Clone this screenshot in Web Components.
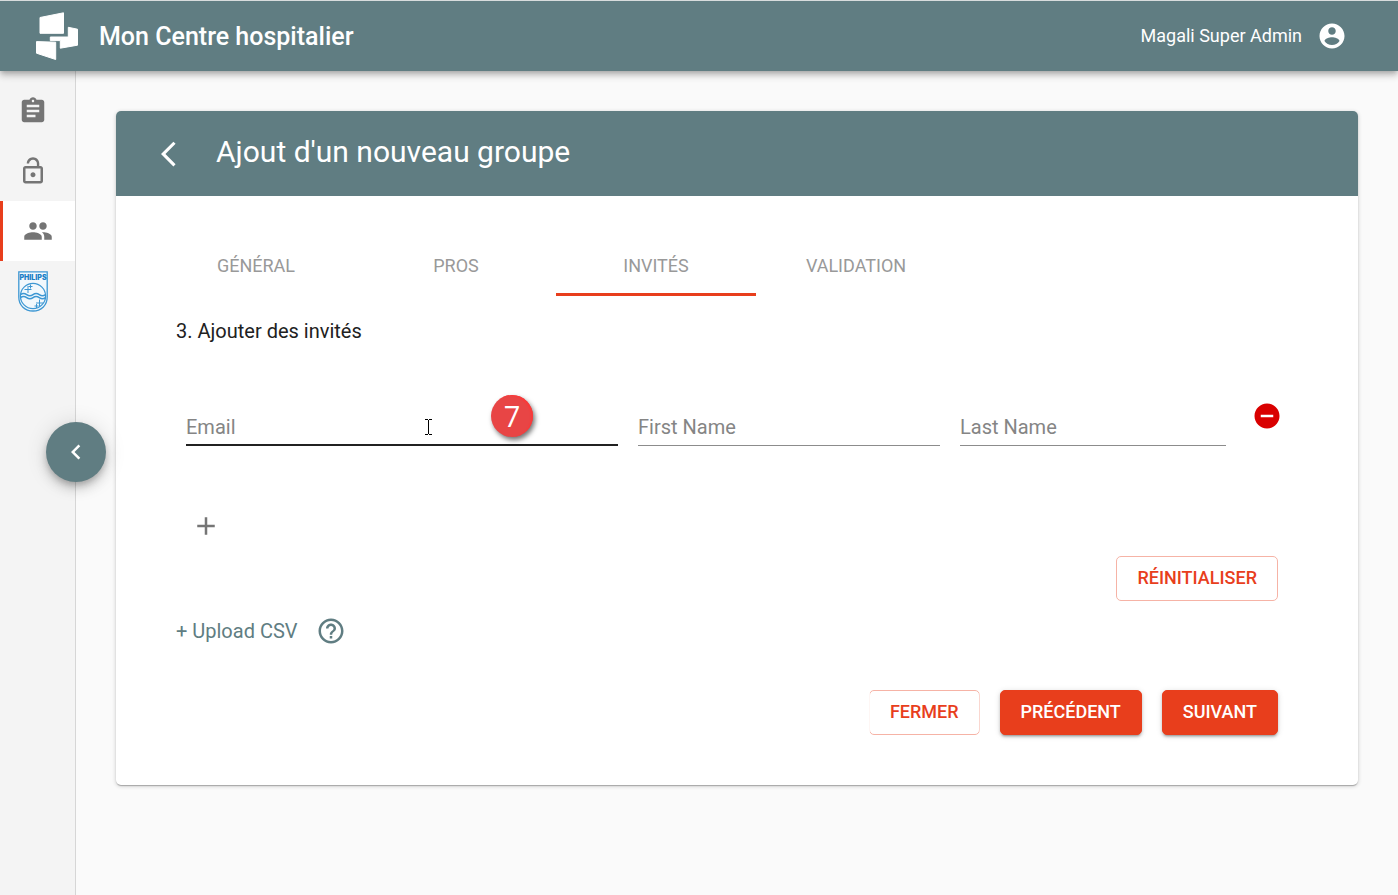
<!DOCTYPE html>
<html lang="fr">
<head>
<meta charset="utf-8">
<title>Mon Centre hospitalier</title>
<meta name="viewport" content="width=device-width, initial-scale=1">
<style>
  :root {
    --teal: #607d82;
    --orange: #e83e1c;
    --orange-soft: #f6b3a6;
    --grey: #757575;
  }
  body {
    margin: 0;
    background: #fafafa;
    color: #212121;
    font: 20px/30px Roboto, "Liberation Sans", sans-serif;
  }
</style>
</head>
<body>
<app-shell>
  <app-header slot="header" heading="Mon Centre hospitalier" user="Magali Super Admin"></app-header>
  <side-nav slot="nav">
    <nav-item icon="clipboard" label="Dossiers"></nav-item>
    <nav-item icon="lock" label="Accès"></nav-item>
    <nav-item icon="people" label="Groupes" active></nav-item>
    <nav-item icon="philips" label="Philips"></nav-item>
  </side-nav>
  <page-card heading="Ajout d'un nouveau groupe">
    <tab-bar>
      <tab-item>GÉNÉRAL</tab-item>
      <tab-item>PROS</tab-item>
      <tab-item active>INVITÉS</tab-item>
      <tab-item>VALIDATION</tab-item>
    </tab-bar>
    <guest-form></guest-form>
  </page-card>
</app-shell>

<script>
const define = (name, html, setup) => {
  const template = document.createElement('template');
  template.innerHTML = html;
  customElements.define(name, class extends HTMLElement {
    connectedCallback() {
      if (this.shadowRoot) return;
      const root = this.attachShadow({ mode: 'open' });
      root.append(template.content.cloneNode(true));
      if (setup) setup(this, root);
    }
  });
};

const icons = {
  clipboard: '<path d="M19 3h-4.18C14.4 1.84 13.3 1 12 1c-1.3 0-2.4.84-2.82 2H5c-1.1 0-2 .9-2 2v14c0 1.1.9 2 2 2h14c1.1 0 2-.9 2-2V5c0-1.1-.9-2-2-2zm-7 0c.55 0 1 .45 1 1s-.45 1-1 1-1-.45-1-1 .45-1 1-1zm2 14H7v-2h7v2zm3-4H7v-2h10v2zm0-4H7V7h10v2z"/>',
  lock: '<path d="M12 17c1.1 0 2-.9 2-2s-.9-2-2-2-2 .9-2 2 .9 2 2 2zm6-9h-1V6c0-2.76-2.24-5-5-5S7 3.24 7 6h1.9c0-1.71 1.39-3.1 3.1-3.1 1.71 0 3.1 1.39 3.1 3.1v2H6c-1.1 0-2 .9-2 2v10c0 1.1.9 2 2 2h12c1.1 0 2-.9 2-2V10c0-1.1-.9-2-2-2zm0 12H6V10h12v10z"/>',
  people: '<path d="M16 11c1.66 0 2.99-1.34 2.99-3S17.66 5 16 5c-1.66 0-3 1.34-3 3s1.34 3 3 3zm-8 0c1.66 0 2.99-1.34 2.99-3S9.66 5 8 5C6.34 5 5 6.34 5 8s1.34 3 3 3zm0 2c-2.33 0-7 1.17-7 3.5V19h14v-2.5c0-2.33-4.67-3.5-7-3.5zm8 0c-.29 0-.62.02-.97.05 1.16.84 1.97 1.97 1.97 3.45V19h6v-2.5c0-2.33-4.67-3.5-7-3.5z"/>',
  account: '<path d="M12 2C6.48 2 2 6.48 2 12s4.48 10 10 10 10-4.48 10-10S17.52 2 12 2zm0 3c1.66 0 3 1.34 3 3s-1.34 3-3 3-3-1.34-3-3 1.34-3 3-3zm0 14.2c-2.5 0-4.71-1.28-6-3.22.03-1.99 4-3.08 6-3.08 1.99 0 5.97 1.09 6 3.08-1.29 1.94-3.5 3.22-6 3.22z"/>',
  back: '<path d="M11.67 3.87L9.9 2.1 0 12l9.9 9.9 1.77-1.77L3.54 12z"/>',
  chevron: '<path d="M15.41 7.41L14 6l-6 6 6 6 1.41-1.41L10.83 12z"/>',
  remove: '<path d="M12 2C6.48 2 2 6.48 2 12s4.48 10 10 10 10-4.48 10-10S17.52 2 12 2zm5 11H7v-2h10v2z"/>',
  add: '<path d="M19 13h-6v6h-2v-6H5v-2h6V5h2v6h6v2z"/>',
  help: '<path d="M11 18h2v-2h-2v2zm1-16C6.48 2 2 6.48 2 12s4.48 10 10 10 10-4.48 10-10S17.52 2 12 2zm0 18c-4.41 0-8-3.59-8-8s3.59-8 8-8 8 3.59 8 8-3.59 8-8 8zm0-14c-2.21 0-4 1.79-4 4h2c0-1.1.9-2 2-2s2 .9 2 2c0 2-3 1.75-3 5h2c0-2.25 3-2.5 3-5 0-2.21-1.79-4-4-4z"/>'
};

define('app-icon', `
  <style>
    :host { display: block; flex: none; width: 30px; height: 30px; }
    svg { display: block; width: 100%; height: 100%; fill: currentColor; }
  </style>
  <svg viewBox="0 0 24 24" aria-hidden="true"></svg>`,
  (host, root) => { root.querySelector('svg').innerHTML = icons[host.getAttribute('name')]; });

define('brand-logo', `
  <style>
    :host { display: block; flex: none; width: 44px; height: 50px; }
    svg { display: block; }
  </style>
  <svg width="44" height="50" viewBox="35 11 44 50" fill="#fff" stroke="#fff" stroke-width="1" stroke-linejoin="round" aria-hidden="true">
    <path d="M40 17.5L63.5 12.8V33.3H40z"/>
    <path d="M68.3 27.3L77.5 29.2V45.2L60.3 48.2V40.6H50.3V37H68.3z"/>
    <path d="M36.5 41.6L55.7 42.2V59.5L36.5 53.2z"/>
  </svg>`);

define('philips-shield', `
  <style>
    :host { display: block; flex: none; width: 30px; height: 41px; }
    svg { display: block; }
  </style>
  <svg width="30" height="41" viewBox="0 0 30 41" fill="none" stroke="#3d97d3" aria-hidden="true">
    <path d="M.8.8H29.2V26C29.2 34.5 23 40 15 40S.8 34.5.8 26z" fill="#f2f8fc" stroke-width="1.3"/>
    <text x="15" y="9" font-family="Inter, sans-serif" font-size="7" font-weight="900" text-anchor="middle" fill="#1b7fc6" stroke="none">PHILIPS</text>
    <circle cx="15" cy="25" r="12.6" stroke-width="1.2"/>
    <path d="M2.5 23.6q3-2.400 6.200 0t6.300 0 6.300 0 6.200 0M2.500 26.600q3-2.400 6.200 0t6.300 0 6.300 0 6.200 0" stroke-width="1.500"/>
    <path d="M10 15v7M6.500 18.500h7M12.500 13.500v4M10.500 15.500h4M21.500 28.500v7M18 32h7M18.500 33v4M16.500 35h4" stroke-width="1"/>
  </svg>`);

define('app-shell', `
  <style>
    :host { display: flex; flex-direction: column; min-height: 100vh; position: relative; }
    .body { display: flex; flex: 1; }
    main { flex: 1; min-width: 0; padding: 40px; }
    .toggle {
      position: absolute; left: 46px; top: 422px; width: 60px; height: 60px;
      display: grid; place-items: center; padding: 0; border: 0; border-radius: 50%;
      background: var(--teal); color: #fff; cursor: pointer;
      box-shadow: 0 4px 6px -1px rgba(0,0,0,.2), 0 7px 12px rgba(0,0,0,.14), 0 1px 22px rgba(0,0,0,.12);
    }
  </style>
  <slot name="header"></slot>
  <div class="body">
    <slot name="nav"></slot>
    <main><slot></slot></main>
  </div>
  <button class="toggle" type="button" aria-label="Réduire le menu"><app-icon name="chevron"></app-icon></button>`);

define('app-header', `
  <style>
    :host { display: block; position: relative; z-index: 1; }
    header {
      display: flex; align-items: center; height: 70px; padding: 0 51px 0 35px;
      border-top: 1px solid #d8dcdd; background: var(--teal); color: #fff;
      box-shadow: 0 2px 5px -1px rgba(0,0,0,.2), 0 5px 6px rgba(0,0,0,.14), 0 1px 12px rgba(0,0,0,.12);
    }
    h1 { flex: 1; margin: 0 20px; padding-top: 2px; font-size: 25px; font-weight: 500; }
    .user { display: flex; align-items: center; gap: 15px; font-size: 18px; line-height: 32px; }
  </style>
  <header>
    <brand-logo></brand-logo>
    <h1></h1>
    <div class="user"><span></span><app-icon name="account"></app-icon></div>
  </header>`,
  (host, root) => {
    root.querySelector('h1').textContent = host.getAttribute('heading');
    root.querySelector('span').textContent = host.getAttribute('user');
  });

define('side-nav', `
  <style>
    :host { display: block; flex: none; width: 75px; border-right: 1px solid #d6d6d6; background: #f4f4f4; }
    nav { padding-top: 10px; }
  </style>
  <nav aria-label="Menu"><slot></slot></nav>`);

define('nav-item', `
  <style>
    :host { display: block; color: var(--grey); }
    a { display: flex; align-items: center; height: 60px; padding-left: 18px; color: inherit; }
    :host([active]) a { padding-left: 20px; border-left: 3px solid var(--orange); background: #fff; }
  </style>
  <a href="#"></a>`,
  (host, root) => {
    const name = host.getAttribute('icon');
    const link = root.querySelector('a');
    link.setAttribute('aria-label', host.getAttribute('label'));
    link.innerHTML = name === 'philips' ? '<philips-shield></philips-shield>' : `<app-icon name="${name}"></app-icon>`;
  });

define('page-card', `
  <style>
    :host {
      display: block; border-radius: 5px; background: #fff;
      box-shadow: 0 1px 4px rgba(0,0,0,.2), 0 1px 1px rgba(0,0,0,.14), 0 2px 1px -1px rgba(0,0,0,.12);
    }
    header {
      display: flex; align-items: center; gap: 25px; height: 85px; padding: 0 45px;
      border-radius: 5px 5px 0 0; background: var(--teal); color: #fff;
    }
    button { padding: 0; border: 0; background: none; color: inherit; cursor: pointer; }
    h2 { margin: 0; padding-bottom: 4px; font-size: 30px; font-weight: 400; line-height: 40px; }
    .content { padding: 40px 80px 50px 40px; }
  </style>
  <header>
    <button type="button" aria-label="Retour"><app-icon name="back"></app-icon></button>
    <h2></h2>
  </header>
  <div class="content"><slot></slot></div>`,
  (host, root) => { root.querySelector('h2').textContent = host.getAttribute('heading'); });

define('tab-bar', `
  <style>
    :host { display: block; }
    div { display: flex; }
  </style>
  <div role="tablist"><slot></slot></div>`);

define('tab-item', `
  <style>
    :host { display: block; flex: 0 1 200px; }
    button {
      width: 100%; height: 60px; padding: 3px 0 0; border: 0; border-bottom: 3px solid transparent;
      background: none; color: #999; font: 400 18px/30px Roboto, sans-serif; cursor: pointer;
    }
    :host([active]) button { border-color: var(--orange); }
  </style>
  <button type="button" role="tab"><slot></slot></button>`,
  (host, root) => root.querySelector('button').setAttribute('aria-selected', host.hasAttribute('active')));

define('text-field', `
  <style>
    :host { display: block; position: relative; min-width: 0; }
    input {
      display: block; box-sizing: border-box; width: 100%; height: 50px; padding: 12px 0 0;
      border: 0; border-bottom: 1px solid #8c8c8c; border-radius: 0; outline: 0;
      background: none; color: #212121; font: 20px/30px Roboto, sans-serif;
    }
    :host([highlighted]) input { padding-top: 13px; border-bottom: 2px solid #212121; }
    input::placeholder { color: #858585; opacity: 1; }
  </style>
  <input type="text"><slot></slot>`,
  (host, root) => {
    const input = root.querySelector('input');
    input.placeholder = host.getAttribute('label');
    input.setAttribute('aria-label', input.placeholder);
  });

define('text-cursor', `
  <style>
    :host { position: absolute; left: 239px; top: 23px; width: 7px; height: 16px; pointer-events: none; }
    svg { display: block; }
  </style>
  <svg width="7" height="16" viewBox="0 0 7 16" fill="none" stroke="#000" shape-rendering="crispEdges" aria-hidden="true">
    <path d="M0 .5h3M4 .5h3M3.500 1v14M0 15.500h3M4 15.500h3"/>
  </svg>`);

define('step-badge', `
  <style>
    :host {
      position: absolute; left: 305px; top: -1px; width: 42px; height: 42px; border-radius: 50%;
      background: #e84545; color: #fff; font: 29px/42px "Open Sans", "Noto Sans", sans-serif; text-align: center;
      box-shadow: inset -2px 1px 1px #f93a3a, 2px 3px 5px rgba(0,0,0,.55);
    }
  </style>
  <slot></slot>`);

define('app-button', `
  <style>
    :host { display: block; }
    button {
      box-sizing: border-box; height: 45px; padding: 0 20px 2px; border: 1px solid var(--orange-soft); border-radius: 5px;
      background: #fff; color: var(--orange); font: 500 18px/30px Roboto, sans-serif; cursor: pointer;
    }
    :host([filled]) button {
      border-color: var(--orange); background: var(--orange); color: #fff;
      box-shadow: 0 3px 2px -2px rgba(0,0,0,.2), 0 2px 3px rgba(0,0,0,.18), 0 1px 6px rgba(0,0,0,.12);
    }
    :host([cut]) { clip-path: inset(0 0 0 1px); }
  </style>
  <button type="button"><slot></slot></button>`);

define('guest-form', `
  <style>
    :host { display: block; padding: 20px 0 0 20px; }
    h3 { margin: 0 0 50px; font-size: 20px; font-weight: 400; line-height: 30px; }
    .guest { display: flex; align-items: flex-start; gap: 20px; padding-left: 10px; }
    .fields { flex: 1; display: grid; grid-template-columns: 432fr 302fr 266fr; gap: 20px; }
    button { display: grid; place-items: center; padding: 0; border: 0; background: none; font: inherit; cursor: pointer; }
    .remove { width: 42px; height: 40px; margin-right: -10px; color: #d90000; }
    .add { width: 60px; height: 60px; margin-top: 50px; color: var(--grey); }
    .end { display: flex; justify-content: flex-end; gap: 20px; }
    .upload { display: flex; align-items: center; gap: 18px; height: 60px; }
    .upload button { color: var(--teal); }
    .actions { margin-top: 29px; }
  </style>
  <form>
    <h3>3. Ajouter des invités</h3>
    <div class="guest">
      <div class="fields">
        <text-field label="Email" highlighted><text-cursor></text-cursor><step-badge>7</step-badge></text-field>
        <text-field label="First Name"></text-field>
        <text-field label="Last Name"></text-field>
      </div>
      <button class="remove" type="button" aria-label="Supprimer"><app-icon name="remove"></app-icon></button>
    </div>
    <button class="add" type="button" aria-label="Ajouter"><app-icon name="add"></app-icon></button>
    <div class="end"><app-button>RÉINITIALISER</app-button></div>
    <div class="upload">
      <button type="button">+ Upload CSV</button>
      <button type="button" aria-label="Aide"><app-icon name="help"></app-icon></button>
    </div>
    <div class="end actions">
      <app-button cut>FERMER</app-button>
      <app-button filled>PRÉCÉDENT</app-button>
      <app-button filled>SUIVANT</app-button>
    </div>
  </form>`);
</script>
</body>
</html>
